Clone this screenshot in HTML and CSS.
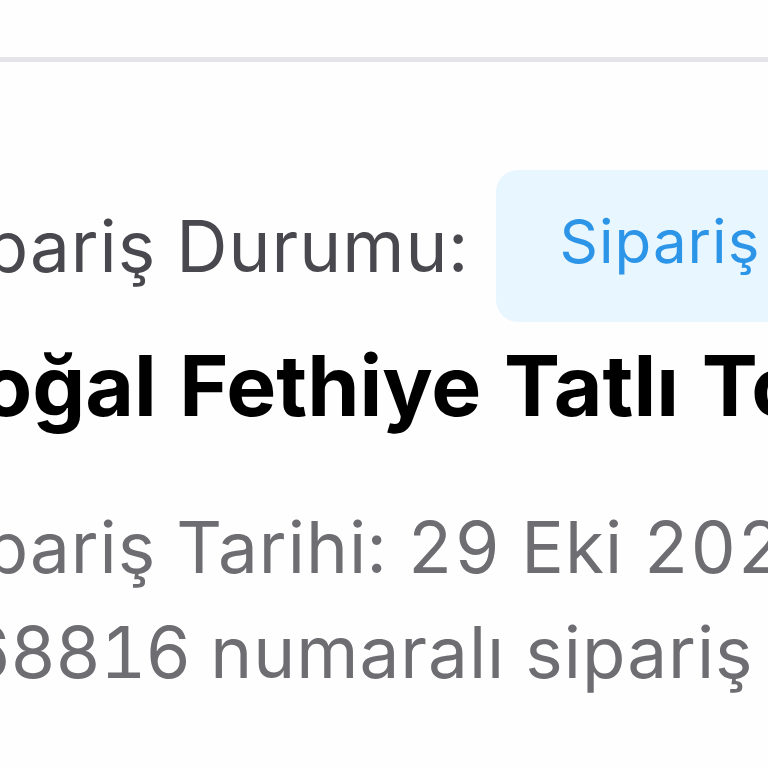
FILE: index.html
```html
<!DOCTYPE html>
<html lang="tr">
<head>
<meta charset="utf-8">
<link rel="stylesheet" href="styles.css">
</head>
<body>
<div class="page">
  <div class="divider"></div>
  <div class="order">
    <div class="status-row">
      <span class="status-label">Sipariş Durumu:</span>
      <span class="status-badge">Sipariş Alındı</span>
    </div>
    <h1 class="order-title">Doğal Fethiye Tatlı Tohumu</h1>
    <p class="order-meta">Sipariş Tarihi: 29 Eki 2023</p>
    <p class="order-meta"><span class="order-number">368816</span> numaralı sipariş</p>
  </div>
</div>
</body>
</html>
```

FILE: styles.css
```css
html, body {
  margin: 0;
  padding: 0;
  background: #fefefe;
}
body {
  width: 768px;
  height: 768px;
  overflow: hidden;
  font-family: Inter, "Noto Sans", sans-serif;
  font-variant-numeric: tabular-nums;
}
.page {
  width: 768px;
  height: 768px;
  overflow: hidden;
}
.divider {
  margin-top: 57px;
  height: 5px;
  background: #e4e4e9;
}
.order {
  margin-left: -80px;
  white-space: nowrap;
}
.status-row {
  display: flex;
  align-items: center;
  gap: 27px;
  margin-top: 108px;
}
.status-label {
  font-size: 71px;
  letter-spacing: 1px;
  color: #48484e;
}
.status-badge {
  display: flex;
  align-items: center;
  height: 152px;
  padding: 0 64px 10px;
  box-sizing: border-box;
  border-radius: 22px;
  background: #e8f6ff;
  color: #2d95e8;
  font-size: 60px;
  letter-spacing: 1px;
}
.order-title {
  margin: 22px 0 0;
  font-size: 84px;
  line-height: 1;
  font-weight: 700;
  letter-spacing: 0;
  color: #000;
}
.order-meta {
  margin: 0;
  font-size: 71px;
  line-height: 105px;
  letter-spacing: 1px;
  color: #6d6d72;
}
.order-number {
  letter-spacing: -1px;
}
.order-title + .order-meta {
  margin-top: 67px;
}
```
